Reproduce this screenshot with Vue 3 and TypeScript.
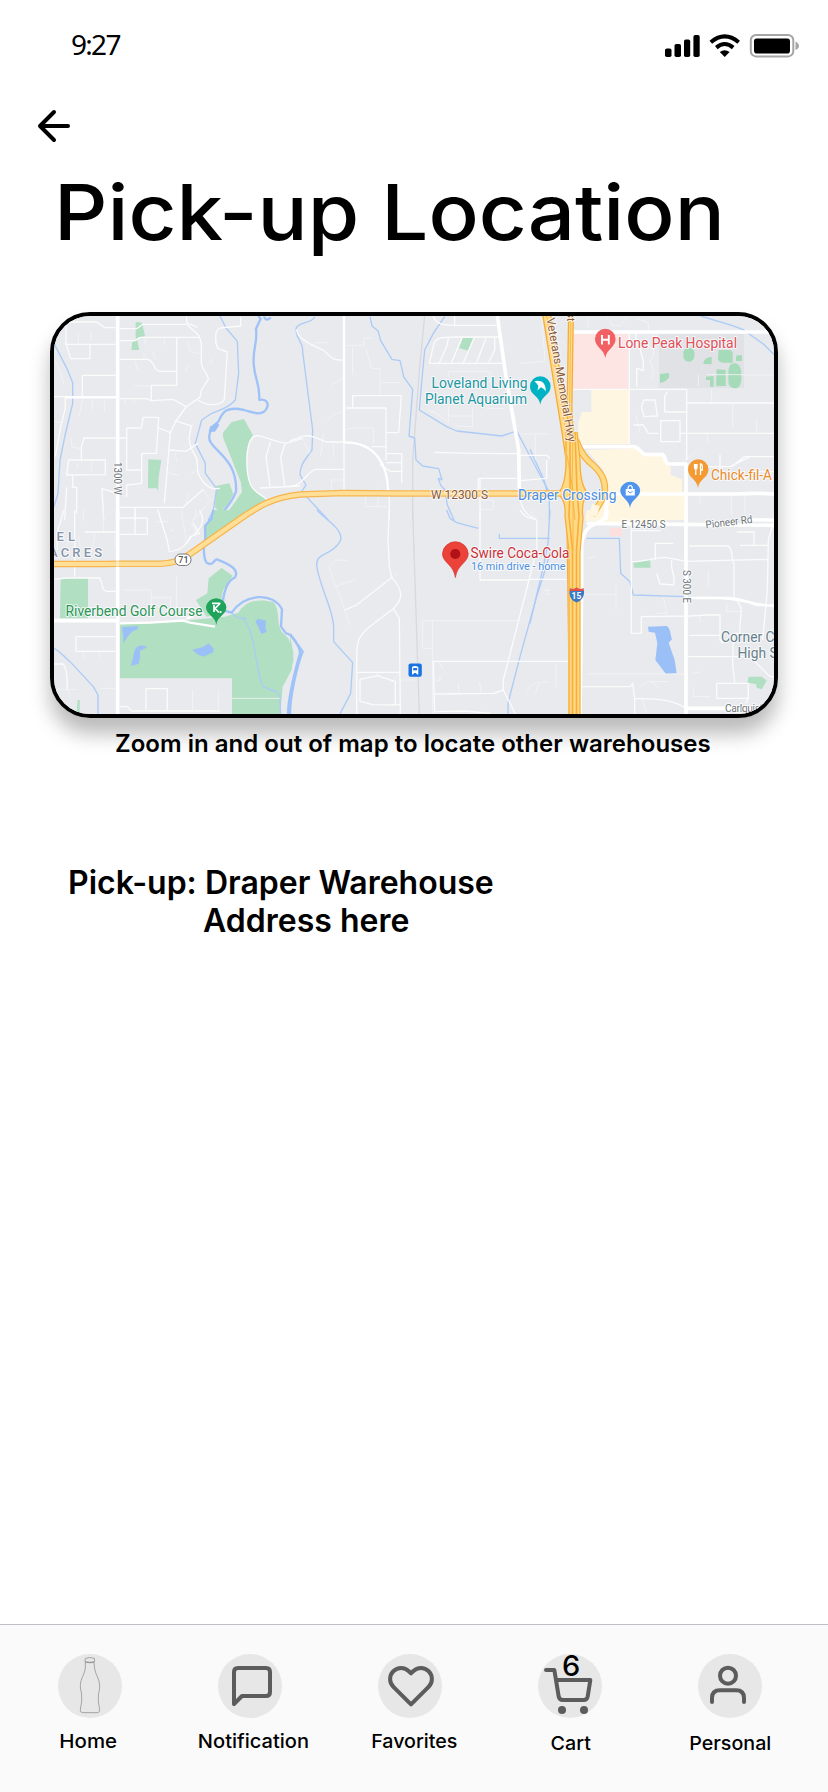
<script setup lang="ts">
interface Tile {
  x: number
  y: number
  tan?: string[]
  green?: string[]
  lake?: string[]
  faint?: string[]
  minor?: string[]
  street?: string[]
  main?: string[]
  creek?: string[]
  river?: string[]
  rail?: string[]
}

// Each tile is drawn at three units per pixel from its own origin.
const tiles: Tile[] = [
  {
    x: 40, y: 300,
    green: [
      'M287 66L306 68L315 108L291 117L298 150L274 150L277 126L287 122Z',
      'M325 478L364 480L356 532L354 572L350 565H324Z',
      'M575 366L612 357L639 406C618 430 617 470 622 515C628 565 652 582 678 597L580 660H545L590 600L606 575L602 545L549 412V398Z',
      'M528 558L568 550L580 582L566 610L540 638L525 622Z',
    ],
    minor: [
      'M42 66H170L194 83H234M78 70V130L92 176H150V132M75 133H232M240 86H290L308 73H440L476 106L484 130V190C488 215 506 222 505 238L484 270L480 292L438 321L406 366L391 398L373 610',
      'M240 122H285L300 112H478M410 112V256H334V300M240 178H322C350 185 336 212 360 214H408M127 290V226H230M42 290H230M240 296H320L334 302L400 298L438 320M440 48V68L472 82M602 50V78L540 84C526 90 526 105 528 130L534 146L562 156L553 298C545 315 505 322 474 300',
      'M76 292V325L62 380L46 470M124 478V440L132 414H258M80 525L86 480H196V524ZM98 526V562H110V640M74 660L80 562M260 384H304L310 352H356L349 460H304M260 384V510H302M305 460V550L260 555V590M356 384L391 398M406 362L454 378L447 415L452 442L470 476L474 520C485 545 498 562 520 566H532',
      'M388 450L438 454L474 430M240 622H430L490 568M285 622V660M191 660L186 566L232 580M640 410C660 400 680 420 736 430L788 415M640 410C614 435 617 520 632 555C645 580 660 580 680 598M692 424L678 470L690 560M736 430L722 470L734 560M660 564L780 558M540 565L522 566',
    ],
    faint: [
      'M115 100V132M153 96V124M315 112V134M374 116V134M312 160V178M285 182L292 210M338 154L346 178M444 122L450 154L484 162M444 195L438 214M506 188C520 170 520 180 514 190M282 258H330M118 346L128 296M155 330L160 296M193 336V296M252 314L258 298M286 310L280 298M46 180L72 250M42 364L62 368M94 414L96 442L122 445M115 488L110 508M154 480V512M466 366L450 385M486 566L512 600L462 660M404 460L412 484M470 514L452 520M386 518L416 526M438 610L446 580',
    ],
    street: ['M76 292H232'],
    main: ['M233 48V660'],
    creek: ['M42 130L82 208L98 248V310L76 402L60 480L54 580L42 620', 'M540 48L558 84L592 124L596 220L586 300C560 330 530 332 512 342L485 360L466 430L496 490V520L530 566L520 630L505 660'],
    river: ['M655 48L662 56L648 86C654 130 635 150 642 200C645 240 660 250 658 300C672 296 690 305 680 325C668 350 640 338 612 330C560 318 548 335 535 365C510 385 500 412 514 430C540 465 592 490 588 575C570 620 530 660 505 662', 'M672 50C676 62 686 60 692 52'],
    lake: ['M510 380L530 367L538 375L525 395H506Z'],
  },
  {
    x: 290, y: 300,
    green: ['M518 114H552L536 152L507 144Z'],
    minor: [
      'M20 88C20 120 80 142 100 150C120 165 120 182 160 180M0 423C35 408 50 402 75 412L110 426H162M0 558C40 560 50 510 80 508H160M162 430V575',
      'M168 324H288V480M188 324V287H334L326 398H290M244 440H288M288 461H335V548M288 488H335M270 494L302 514H338M298 574V660M430 48C435 72 460 76 495 76H620M494 48V76M418 190H645M418 190L432 130C440 112 450 112 500 111H628M448 188L470 140L476 112M484 188L516 114M520 188L552 114M560 188L588 114M596 188L614 150V112M432 457L545 460L688 461M565 580V535H680M570 535V660',
      'M690 466H770L780 476M692 542L770 535V480',
      'M688 570C690 620 700 640 740 660',
    ],
    faint: [
      'M188 140V224M168 136H222V114H248M226 142L240 186L244 206H270V286M272 248H330M62 140L78 128H112M158 236L122 255M160 334C130 340 128 352 112 358M168 388L190 384H250V432M130 426V470M100 400L92 468M35 410L60 460M125 570V540H158M226 585V620H292M264 560V622M414 330L440 340L475 366V330M476 230V214H600V250M548 322V380L496 378M476 320V348H548M590 326H640M690 190L765 184L755 50M694 402H780M736 402V480M570 600H610V628H570',
    ],
    street: ['M162 48V430', 'M162 427C260 425 294 500 294 574'],
    main: ['M622 48L648 230L686 450L688 572'],
    creek: [
      'M75 50C65 72 20 65 18 88C20 125 42 128 38 155L68 390L66 450C50 475 30 490 30 525L48 555L35 575L115 660',
      'M240 50L246 78L264 92L272 122L290 152L306 178L330 182L342 232L368 268L357 408L374 414L378 480L398 498L446 506L456 540L445 535L452 556L465 570L472 615L492 660',
      'M464 50L430 100L404 150L393 270L388 330L470 380L500 393L635 408L680 393L758 540L780 580',
    ],
    rail: ['M404 48L388 215L380 320L368 480V660'],
  },
  {
    x: 530, y: 300,
    tan: [
      'M184 270H298V432H145V370L155 336H184Z',
      'M170 450L315 445L338 464H400L412 494L422 500V525L456 538V575H464V615H470V660H180L205 590L235 560L220 510Z',
    ],
    green: [
      'M390 222L417 219V232Q405 249 390 248Z', 'M520 192Q520 172 545 171V193Z',
      'M566 150H596Q608 150 608 160V188H580Q564 188 564 175Z', 'M620 166H636V183H618V175Z',
      'M528 230L551 228V260H540V240H528Z', 'M560 208L587 210V258H558Z',
      'M595 212Q597 188 617 190Q635 195 634 225Q636 265 615 265Q594 265 595 240Z',
      'M460 164A17 17 0 1 1 493 164A17 17 0 1 1 460 164',
    ],
    minor: [
      'M298 96V432M128 268H470V480M470 309H735M450 400H735M318 100V130L330 145L340 184V212L320 205V260M342 300H375L382 348L342 350L334 320ZM310 375H340L355 400H385M392 362H450V425H392ZM404 336V290L412 274M404 336H470',
      'M570 500V535H645L675 515H735M476 500H600L660 470H735M570 464V500M606 500L642 470H735',
      'M735 96V128M160 440H210',
    ],
    faint: [
      'M230 50L250 78L275 75L290 50M176 50L172 80M320 55L355 68V95M370 105V170L360 185L370 210L365 240M320 135H340M350 135L370 150M530 224H640M636 225H735M505 224V258M545 310V268M532 400V430M608 385V310M680 395V358M318 345L330 400M450 495L500 450M605 582V645M645 582V655M510 582V610',
    ],
    street: [],
    main: ['M130 96H735', 'M155 440H310C330 440 330 464 350 464H395C410 464 400 492 418 492H470', 'M468 488V660', 'M170 582H620C680 578 700 580 735 582', 'M230 560C235 610 225 625 228 660'],
    creek: ['M512 48L605 76L638 88L700 132L735 166', 'M0 448L42 540L58 600V660'],
  },
  {
    x: 40, y: 510,
    green: [
      'M62 204H144V325H60Z',
      'M545 174L578 197L550 240L545 262L555 310L500 320L468 270L502 250L506 205Z',
      'M240 343L330 340L430 332L555 320L595 308C620 270 655 266 700 276C722 300 708 340 725 365L745 385L759 425L755 480L728 530L720 612H576V505H240Z',
      'M520 0H580L640 0L494 92V50L520 25Z', 'M42 592H88L110 606L113 570H119V608L100 614H42Z',
    ],
    lake: [
      'M246 352L295 348L292 358L275 365L262 382L250 400V380Z',
      'M284 422Q290 405 310 407L322 412L300 422V445L295 462L272 467L278 448L282 430Z',
      'M456 420L490 410L506 400L520 415V427L490 440L475 434Z',
      'M646 335L654 326L678 332L676 350L680 366L664 372L655 350Z',
    ],
    faint: [
      'M190 0V64M130 0V32M86 72L80 110M115 74L120 108M165 70L155 125M225 74V110M334 240V320M250 240H332M335 263H392V318M410 200V320M425 0C425 40 440 60 435 95M470 0L455 45L470 70M130 425V445M178 426V444M42 538H110M178 535H228M458 540V600M535 540V598M576 565H720M85 540L90 565',
      'M350 35H385M392 62H402M400 290L440 305',
    ],
    minor: [
      'M52 65L72 0M104 0V200M134 66H228M42 208L80 204H180C190 230 185 240 200 244H228M52 66V120M285 0V75M240 24H322V73H240M354 0C370 60 385 90 388 125C425 120 438 105 450 80L478 70L460 40M478 0C510 50 455 70 440 100M108 380H228M108 380V424H228M42 462H70C85 485 80 510 82 538M318 536H382V602H318ZM240 590H262L274 603H540',
    ],
    street: ['M240 340L330 338L430 332L450 338L525 350', 'M460 318L440 325'],
    main: ['M233 0V612', 'M42 332H232'],
    creek: ['M42 415C70 430 70 440 90 455L160 530L174 555V612', 'M606 323C650 360 645 490 670 530C700 545 722 540 720 570L722 612', 'M575 308L590 322L620 325'],
    river: ['M520 0L515 25L495 48L496 85C488 110 492 150 500 158C520 170 520 150 530 148C560 160 600 175 585 202C550 220 545 280 552 302L575 308C615 250 700 245 726 298L723 350L738 370C755 370 780 410 780 430C760 500 745 560 744 612'],
  },
  {
    x: 290, y: 510,
    green: ['M0 375L10 430V455L0 480Z'],
    minor: [
      'M298 0L294 85L298 170L305 202C350 250 330 275 310 296L245 345C200 380 200 400 200 450V612M308 200L200 285L164 300M310 296L328 325L331 612M200 487H330M210 508L262 497L316 515V585L248 584L210 574ZM316 584H334',
      'M570 0V210H720M430 454H720M430 454L434 610M433 552L612 550L640 540L676 612M432 605L525 603L600 610M690 0C705 25 720 22 740 30V120M740 120L640 510V540',
    ],
    faint: ['M172 152L142 150C110 165 115 170 138 228L164 300L180 345M138 228L194 210M305 202L322 190M262 484V496M330 486L304 518M334 510H372M398 332H686M398 332V415H428M428 332V610M448 458L460 480M430 514L452 510L446 498M506 518V550M568 515L574 548M750 516C725 518 715 535 706 550M764 242L780 240M764 254L780 252'],
    creek: ['M80 0C110 30 170 65 148 98C120 140 80 125 80 165C85 220 130 300 131 350V395L188 458L182 550L150 612', 'M470 0L480 25L500 38L565 55M628 72V85H780M780 128L770 165L740 260L690 440L654 580V612'],
    river: ['M0 372L38 425C20 470 0 560 0 612'],
    rail: ['M368 0L388 612'],
  },
  {
    x: 530, y: 510,
    tan: ['M170 0H464V28L410 30V40L272 38L165 32Z'],
    green: ['M310 158L360 150L362 173H312Z', 'M656 500H695L710 512L695 538L680 533L678 522L652 518Z'],
    lake: ['M354 350L410 348C422 355 420 370 426 388L416 398L434 450L440 490L408 492L376 450L382 400L375 368L356 365Z'],
    minor: [
      'M304 44V370H334V320L478 318L530 315H570V390L580 400M304 62H392M376 100H430M376 100V150M306 155C350 155 370 142 405 142L470 154L715 148M478 108H595C615 130 600 150 612 160V262C650 300 625 320 630 370H610L608 460L614 520M425 150C420 185 440 200 430 225L390 222L380 190M478 376H570M475 440H700M152 530H300L308 520L314 566C400 565 440 575 468 595M314 566V612M560 520H655V565H560ZM655 565L648 580M735 25L715 90L712 240L698 390M0 454H115M0 208H110M620 66H672V106H630M670 106H715',
      'M675 455L720 500H735',
    ],
    faint: ['M152 253H258M258 228V298M170 145L198 140M170 492H465M78 460V530M55 515C25 515 22 530 18 550M490 532V560H540M336 564L350 610M330 530L350 515H415M360 513L388 535M400 264L412 310H380M490 490L510 485M510 315V335M535 180V230M0 0L20 30V120L0 190M42 240H60M590 280V304H635'],
    street: ['M475 264H600C660 270 660 285 735 288M475 264C590 260 640 270 680 285L735 286'],
    main: ['M232 0C225 60 170 15 155 100V240L150 612', 'M170 40L735 46', 'M468 0V612', 'M468 595H735', 'M655 30H735'],
    creek: ['M170 85H268L272 190L300 215L310 255L465 260', 'M60 0L54 100L40 170L0 340'],
  },
]

const navItems = [
  { id: 'home', label: 'Home', drop: 0, shift: -2, stretch: 1.06 },
  { id: 'chat', label: 'Notification', drop: 0, shift: 3, stretch: 1.04 },
  { id: 'heart', label: 'Favorites', drop: 0, shift: 4, stretch: 1.02 },
  { id: 'cart', label: 'Cart', drop: 2, shift: 1, stretch: 1.02 },
  { id: 'user', label: 'Personal', drop: 2, shift: 0, stretch: 1.02 },
]
</script>

<template>
  <div class="screen">
    <header class="status">
      <span class="time">9:27</span>
      <svg class="indicators" viewBox="0 0 160 50" aria-hidden="true">
        <rect x="15" y="28.5" width="6.5" height="8.5" rx="1.8" />
        <rect x="24.5" y="24" width="6.5" height="13" rx="1.8" />
        <rect x="34" y="19.5" width="6.2" height="17.5" rx="1.8" />
        <rect x="43.4" y="15" width="6.3" height="22" rx="1.8" />
        <path class="arc" d="M60.8 22.2Q74.7 10.5 88.7 22.2M66.3 27.6Q74.7 20.5 83.2 27.6" />
        <path d="M69.8 32.1Q74.7 28.4 79.6 32.1L74.7 37Z" />
        <rect class="shell" x="100.8" y="15" width="42.5" height="21.4" rx="5.2" />
        <rect x="104" y="18.5" width="36" height="15" rx="2.8" />
        <path class="knob" d="M145.5 21.5Q149 23.5 149 26T145.5 30Z" />
      </svg>
    </header>

    <button class="back" aria-label="Back">
      <svg viewBox="0 0 36 36"><path d="M32 18H4M18 4L4 18L18 32" /></svg>
    </button>
    <h1>Pick-up Location</h1>

    <div class="map">
      <svg viewBox="54 316 720 398">
        <rect x="54" y="316" width="720" height="398" fill="#e8eaed" />
        <path d="M659 334H744V388H659Z" fill="#e0e2e6" />
        <path d="M572 334H628V389H572Z" fill="#fde5e4" />
        <path d="M610 528H622V536H610Z" fill="#fbe0de" />
        <g v-for="t in tiles" :key="`a${t.x}-${t.y}`" :transform="`translate(${t.x} ${t.y}) scale(.33333)`">
          <path v-for="d in t.tan" :key="d" :d="d" fill="#fef6e0" />
          <path v-for="d in t.green" :key="d" :d="d" :fill="t.x === 530 && t.y === 300 ? '#a5dbb9' : '#b0dfc1'" />
          <path v-for="d in t.rail" :key="d" :d="d" class="line rail" />
          <path v-for="d in t.creek" :key="d" :d="d" class="line creek" />
          <path v-for="d in t.river" :key="d" :d="d" class="line river" />
          <path v-for="d in t.lake" :key="d" :d="d" fill="#9bc0f8" />
        </g>
        <g v-for="t in tiles" :key="`b${t.x}-${t.y}`" :transform="`translate(${t.x} ${t.y}) scale(.33333)`">
          <path v-for="d in t.faint" :key="d" :d="d" class="line faint" />
          <path v-for="d in t.minor" :key="d" :d="d" class="line minor" />
          <path v-for="d in t.street" :key="d" :d="d" class="line street" />
          <path v-for="d in t.main" :key="d" :d="d" class="line main" />
        </g>

        <path class="line hwy-edge" d="M50 564L104 564L117 563.8H160C178 563 184 558 190 554L240 519C256 508 272 497 300 494.5L343 493L400 493.5H566" />
        <path class="line hwy" d="M50 564L104 564L117 563.8H160C178 563 184 558 190 554L240 519C256 508 272 497 300 494.5L343 493L400 493.5H566" />
        <path class="line white-cross" d="M117.6 558V570" />

        <g fill="none" stroke-linejoin="round">
          <path d="M571 314L569.5 408L572 455" stroke="#f6ad3b" stroke-width="6" />
          <path d="M571 314L569.5 408L572 455" stroke="#ffda85" stroke-width="3.4" />
          <path d="M571 314L569.5 408L572 455" stroke="#f6b545" stroke-width=".8" />
          <path d="M576 440C582 456 588 461 594 466C602 474 605 480 605 490C604 500 598 504 593 516" stroke="#f6ad3b" stroke-width="6.6" />
          <path d="M576 440C582 456 588 461 594 466C602 474 605 480 605 490C604 500 598 504 593 516" stroke="#ffda85" stroke-width="4.4" />
          <path d="M593 516L596 505" stroke="#fef6e0" stroke-width="8" />
          <path d="M546.5 314L566 433L570 460L573.5 720" stroke="#f6ad3b" stroke-width="9" />
          <path d="M546.5 314L566 433L570 460L573.5 720" stroke="#ffda85" stroke-width="6.4" />
          <path d="M546.5 314L566 433" stroke="#f9bd55" stroke-width="1" />
        </g>
        <path d="M565 432H578L580 460Q580 480 586 490V493Q582 500 583 516L580 550V720H568V550L565 512Q566 503 561 495V490Q565 480 565 470Z" fill="#ffd983" />
        <g fill="none" stroke="#f7ae3b">
          <path d="M566 432V466Q565 484 560 491M560 496Q566 502 565 516L569 552V720" stroke-width="1.3" />
          <path d="M577 432L580 460Q580 482 586 491M586 496Q581 505 583 518L580 552V720" stroke-width="1.3" />
          <path d="M570 432V490L569 516L572.5 550V720M575 432L577 490L579 516L576.5 550V720" stroke-width="1.6" />
          <path d="M567 455L573 490V550M573 432L572 490L575 520" stroke-width=".8" />
        </g>

        <g class="labels">
          <text class="teal big" x="431.5" y="388" textLength="96" lengthAdjust="spacingAndGlyphs">Loveland Living</text>
          <text class="teal big" x="425" y="403.5" textLength="102" lengthAdjust="spacingAndGlyphs">Planet Aquarium</text>
          <text class="red-soft big" x="618" y="348" textLength="119" lengthAdjust="spacingAndGlyphs">Lone Peak Hospital</text>
          <text class="orange big" x="711" y="479.5" textLength="61" lengthAdjust="spacingAndGlyphs">Chick-fil-A</text>
          <text class="blue big" x="518" y="499.5" textLength="98.5" lengthAdjust="spacingAndGlyphs">Draper Crossing</text>
          <text class="green-t big" x="65.5" y="616" textLength="137" lengthAdjust="spacingAndGlyphs">Riverbend Golf Course</text>
          <text class="red big" x="470.5" y="558" textLength="99" lengthAdjust="spacingAndGlyphs">Swire Coca-Cola</text>
          <text class="blue" x="471" y="570" font-size="10.4" textLength="94.5" lengthAdjust="spacingAndGlyphs">16 min drive - home</text>
          <text class="brown" x="431" y="499" font-size="12.5" textLength="57" lengthAdjust="spacingAndGlyphs">W 12300 S</text>
          <text class="gray" x="621.5" y="527.5" font-size="10.8" textLength="44" lengthAdjust="spacingAndGlyphs">E 12450 S</text>
          <text class="gray" x="706" y="528.5" font-size="10.8" textLength="47" lengthAdjust="spacingAndGlyphs" transform="rotate(-7 706 528)">Pioneer Rd</text>
          <text class="slate" x="56.5" y="541" font-size="13" textLength="18.5">EL</text>
          <text class="slate" x="49" y="556.5" font-size="13" textLength="53">ACRES</text>
          <text class="school" x="721" y="641.5" font-size="13.8">Corner Canyon</text>
          <text class="school" x="737.5" y="658" font-size="13.8">High School</text>
          <text class="gray" x="725" y="711.5" font-size="10.5" textLength="38">Carlquist</text>
          <text class="gray" font-size="11" textLength="33" lengthAdjust="spacingAndGlyphs" transform="translate(113.8 462) rotate(90)">1300 W</text>
          <text class="gray" font-size="11" textLength="33" lengthAdjust="spacingAndGlyphs" transform="translate(682.5 570) rotate(90)">S 300 E</text>
          <text class="brown" font-size="11.8" textLength="126" lengthAdjust="spacingAndGlyphs" transform="translate(546.5 318.5) rotate(80)">Veterans Memorial Hwy</text>
          <text class="brown" font-size="11" transform="translate(567.5 312) rotate(92)">st</text>
        </g>

        <g>
          <path d="M540.3 404.5C539 395.5 530 395 530 386.5A10.3 10.3 0 0 1 550.6 386.5C550.6 395 541.6 395.5 540.3 404.5Z" fill="#00b3c4" />
          <path d="M534.5 381.5Q537.5 380 541.5 381.5Q546 384 545.8 391.5Q543 387.5 540.8 387.2L537.5 390.5L538.3 385.8Q536.5 383 534.5 381.5Z" fill="#fff" />
          <path d="M605.3 358C604 349 595 347 595 339A10.3 10.3 0 0 1 615.6 339C615.6 347 606.6 349 605.3 358Z" fill="#f36064" />
          <path d="M602 335V344.5M608.8 335V344.5M602 339.8H608.8" stroke="#fff" stroke-width="1.9" />
          <path d="M698 488C697 479 688 478 688 469.5A10.2 10.2 0 0 1 708.4 469.5C708.4 478 699 479 698 488Z" fill="#f39a32" />
          <path d="M694.5 464V468Q696 470 697 468V464M695.8 464V475M700.5 475V464Q703 464 702.3 470H700.5" fill="none" stroke="#fff" stroke-width="1.3" />
          <path d="M630 508C629 499 620.2 498 620.2 490A10.2 10.2 0 0 1 640.2 490C640.2 498 631 499 630 508Z" fill="#5094ee" />
          <path d="M625.7 489H634.8V495.5H625.7Z" fill="#fff" />
          <path d="M628 489Q628 485.5 630.2 485.5T632.4 489" fill="none" stroke="#fff" stroke-width="1.2" />
          <path d="M628 491Q630.2 494.5 632.5 491" fill="none" stroke="#5094ee" />
          <path d="M216.3 625C215.5 616 206 615 206 607A10.3 10.3 0 0 1 226.4 607C226.4 615 217 616 216.3 625Z" fill="#20a35a" />
          <path d="M212 603.3H220.5M214 605V612M219.5 604L215 608.5L219 612.5" fill="none" stroke="#fff" stroke-width="1.7" />
          <circle cx="220.6" cy="612" r="1.1" fill="#fff" />
          <path d="M455.4 577.5C453.5 564 442.5 563 442.5 553.5A12.9 12.9 0 0 1 468.2 553.5C468.2 563 457.3 564 455.4 577.5Z" fill="#eb423a" stroke="#d3322e" stroke-width=".7" />
          <circle cx="455.3" cy="554" r="5.1" fill="#b01217" />
        </g>
        <rect x="175" y="554" width="16" height="11.5" rx="5.5" fill="#fff" stroke="#757575" />
        <text x="178.3" y="563.2" font-size="9" font-weight="500" fill="#555" font-family="Roboto, sans-serif">71</text>
        <rect x="408.5" y="663.5" width="13.3" height="13.3" rx="2" fill="#1a73e0" />
        <path d="M412 667Q415 664.8 418.3 667V672.5L418.3 674.5H417L416 673H414.3L413 674.5H412Z" fill="#fff" />
        <path d="M413.2 668H417.1V670.3H413.2Z" fill="#1a73e0" />
        <path d="M570 588Q573 590 576.7 587.5Q580 590 583.5 588L584 591H569.5Z" fill="#e0524c" />
        <path d="M569.5 591H584C584.5 597 581 601 576.7 602.5C572 601 569 597 569.5 591Z" fill="#3b7ac4" />
        <text x="571.5" y="599.3" font-size="8.5" font-weight="700" fill="#fff" font-family="Roboto, sans-serif">15</text>
      </svg>
    </div>
    <p class="hint">Zoom in and out of map to locate other warehouses</p>

    <section class="pickup">
      <p>Pick-up: Draper Warehouse</p>
      <p class="address">Address here</p>
    </section>

    <nav>
      <a v-for="item in navItems" :key="item.id" :class="['item', item.id]">
        <span class="disc">
          <svg v-if="item.id === 'home'" class="bottle" viewBox="174 132 192 192">
            <path d="M257 145Q270 140 283 145L284 155Q270 159 256 155ZM257 157Q270 160 282 157L284 177C287 195 298 205 299 226C300 240 294 250 295 265C294 280 299 290 299 302Q298 308 292 308H248Q241 308 241 301C242 285 246 280 245 264C246 245 240 240 241 224C242 205 253 195 256 176Z" />
          </svg>
          <svg v-else-if="item.id === 'chat'" viewBox="654 132 192 192">
            <path d="M702 282V186Q702 174 714 174H798Q810 174 810 186V246Q810 258 798 258H726Z" />
          </svg>
          <svg v-else-if="item.id === 'heart'" viewBox="1134 132 192 192">
            <path class="thin" transform="translate(1161 156) scale(6)" d="M20.84 4.61a5.5 5.5 0 0 0-7.78 0L12 5.67l-1.06-1.06a5.5 5.5 0 0 0-7.78 7.78l1.06 1.06L12 21.23l7.78-7.78 1.06-1.06a5.5 5.5 0 0 0 0-7.78z" />
          </svg>
          <svg v-else-if="item.id === 'cart'" viewBox="372 132 192 192">
            <path d="M396 180H421L434 259Q436 270 447 270H509Q519 270 521 260L529 210H427" />
            <circle class="dot" cx="444" cy="300" r="12" /><circle class="dot" cx="510" cy="300" r="12" />
          </svg>
          <svg v-else viewBox="852 132 192 192">
            <circle cx="942" cy="197" r="24" />
            <path d="M894 276V264Q894 241 918 241H966Q990 241 990 264V276" />
          </svg>
          <b v-if="item.id === 'cart'" class="count">6</b>
        </span>
        <span
          class="label"
          :style="{ transform: `scaleX(${item.stretch})`, marginTop: 11 + item.drop + 'px', marginLeft: item.shift * 2 + 'px' }"
        >{{ item.label }}</span>
      </a>
    </nav>
  </div>
</template>

<style>
body { background: #fff; }
</style>

<style scoped>
.screen {
  width: 828px;
  height: 1792px;
  display: flex;
  flex-direction: column;
  background: #fff;
  color: #000;
  font-family: Inter, 'Liberation Sans', sans-serif;
  overflow: hidden;
}
p, h1 { margin: 0; }
.status {
  display: flex;
  justify-content: space-between;
  height: 70px;
  padding: 20px 18px 0 71px;
  box-sizing: border-box;
}
.time {
  font: 400 28px/48px 'Noto Sans', 'Open Sans', sans-serif;
  letter-spacing: -1.7px;
}
.indicators { width: 160px; height: 50px; }
.arc { fill: none; stroke: #000; stroke-width: 4; }
.shell { fill: none; stroke: #a6a6a6; stroke-width: 2; }
.knob { fill: #a6a6a6; }
.back {
  width: 36px;
  height: 36px;
  margin: 38px 0 0 36px;
  padding: 0;
  border: 0;
  background: none;
}
.back svg {
  display: block;
  fill: none;
  stroke: #000;
  stroke-width: 4;
  stroke-linecap: round;
  stroke-linejoin: round;
}
h1 {
  height: 96px;
  margin: 20px 0 0 54px;
  font-weight: 500;
  font-size: 77px;
  line-height: 96px;
  white-space: nowrap;
  transform: scaleX(1.082);
  transform-origin: 0 0;
}
.map {
  box-sizing: border-box;
  flex: none;
  width: 728px;
  height: 406px;
  margin: 52px 0 0 50px;
  border: 4px solid #000;
  border-radius: 40px;
  overflow: hidden;
  box-shadow: 0 16px 20px rgba(0, 0, 0, 0.27);
}
.map svg { display: block; width: 720px; height: 398px; }
.line { fill: none; stroke-linejoin: round; stroke-linecap: butt; }
.rail { stroke: #d7d9dc; stroke-width: 4; }
.creek { stroke: #accbf7; stroke-width: 4; }
.river { stroke: #9fc3f8; stroke-width: 7; }
.faint { stroke: #f3f4f6; stroke-width: 2.5; }
.minor { stroke: #fbfbfc; stroke-width: 4; }
.street { stroke: #fff; stroke-width: 7; }
.main { stroke: #fff; stroke-width: 11; }
.hwy-edge { stroke: #f6b54d; stroke-width: 6.6; }
.hwy { stroke: #ffdf98; stroke-width: 4.2; }
.white-cross { stroke: #fff; stroke-width: 3; opacity: 0.4; }
.labels text {
  font-family: Roboto, sans-serif;
  font-weight: 400;
  paint-order: stroke;
  stroke: rgba(255, 255, 255, 0.75);
  stroke-width: 2px;
  stroke-linejoin: round;
}
.labels .big { font-size: 14px; }
.labels .teal { fill: #2196a3; }
.labels .red-soft { fill: #e04f58; }
.labels .orange { fill: #e98a2c; }
.labels .blue { fill: #4a8fe3; }
.labels .green-t { fill: #2c9558; }
.labels .red { fill: #cb3038; }
.labels .brown { fill: #8a5a3c; }
.labels .gray { fill: #6d7479; }
.labels .slate { fill: #8593a8; font-weight: 500; }
.labels .school { fill: #66808b; }
.hint {
  position: relative;
  margin: 11px 0 0 115px;
  font-size: 24px;
  font-weight: 600;
  line-height: 30px;
  letter-spacing: 0.02px;
  white-space: nowrap;
}
.pickup {
  margin: 105px 0 0 68px;
  font-size: 32px;
  font-weight: 600;
  line-height: 38px;
  white-space: nowrap;
}
.address { padding-left: 135px; }
nav {
  box-sizing: border-box;
  display: grid;
  grid-template-columns: repeat(5, 160px);
  height: 168px;
  margin-top: auto;
  padding: 29px 0 0 10px;
  border-top: 1px solid #bdc1c6;
  background: #fafafa;
}
.item { display: flex; flex-direction: column; align-items: center; }
.disc {
  position: relative;
  width: 64px;
  height: 64px;
  border-radius: 50%;
  background: #e7e7e7;
}
.disc svg {
  display: block;
  width: 64px;
  height: 64px;
  fill: none;
  stroke: #5c5c5c;
  stroke-width: 12;
  stroke-linecap: round;
  stroke-linejoin: round;
}
.disc .thin { stroke-width: 2; }
.disc .bottle { stroke: #777; stroke-width: 1.8; }
.disc .dot { fill: #5c5c5c; stroke: none; }
.count {
  position: absolute;
  top: -6px;
  left: 24px;
  font-size: 29px;
  font-weight: 500;
  line-height: 36px;
}
.label {
  font-size: 19.3px;
  font-weight: 500;
  line-height: 24px;
  white-space: nowrap;
}
</style>
